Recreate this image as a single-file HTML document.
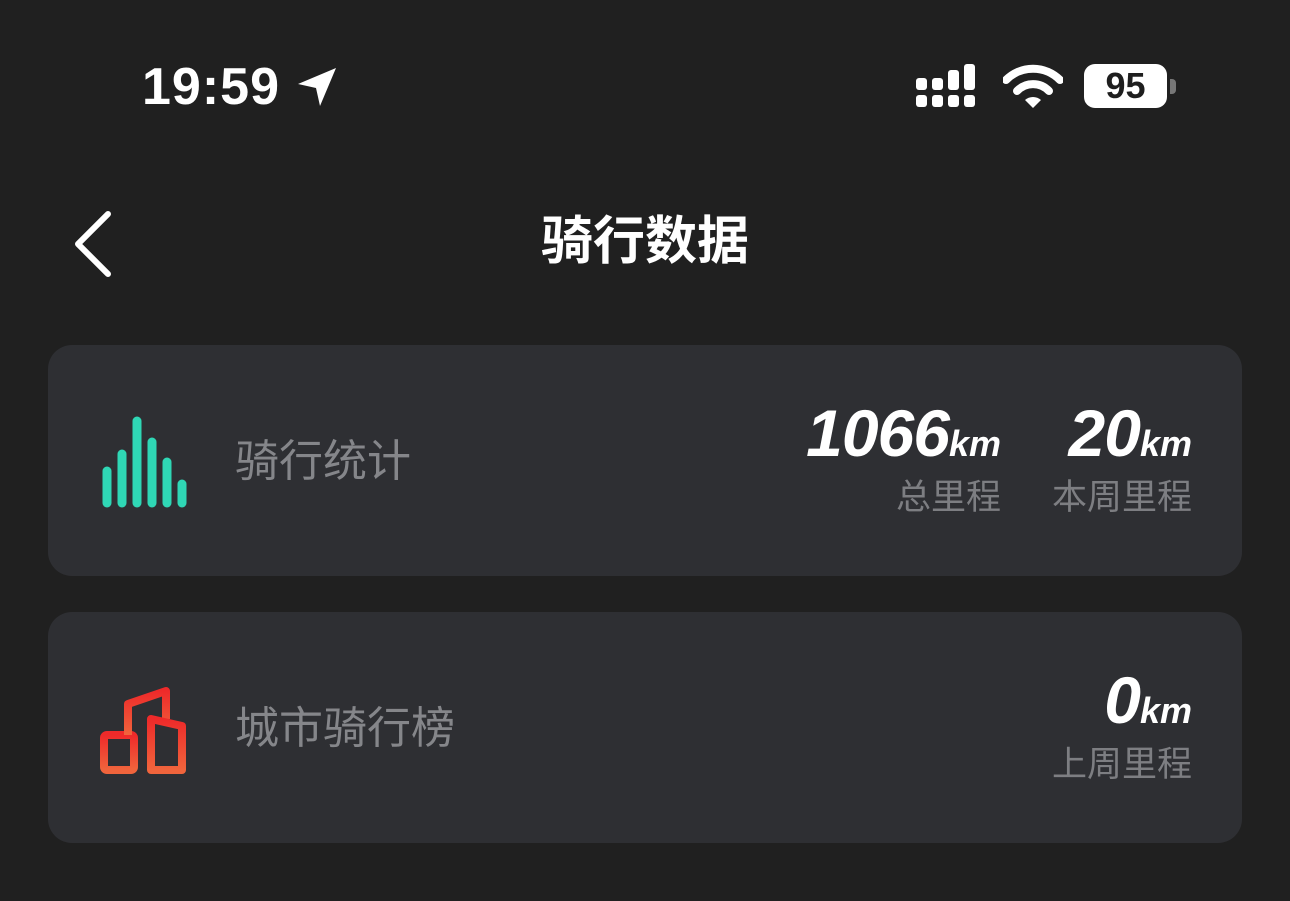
<!DOCTYPE html>
<html><head><meta charset="utf-8"><style>
body{margin:0;width:1290px;height:901px;background:#202020;overflow:hidden;position:relative;font-family:"Liberation Sans","Noto Sans CJK SC",sans-serif;color:#fff}
.a{position:absolute}
.card{position:absolute;left:48px;width:1194px;height:231px;background:#2e2f33;border-radius:24px}
.lbl{position:absolute;left:187px;font-size:44px;color:#85868a;line-height:1}
.num{position:absolute;font-weight:bold;font-style:italic;font-size:66px;letter-spacing:-1px;line-height:1;text-align:right;white-space:nowrap}
.num small{font-size:36px;letter-spacing:0}
.sub{position:absolute;font-size:35px;color:#7d7e82;line-height:1;text-align:right}
</style></head><body>
<div class="a" style="left:142px;top:61px;font-size:52px;font-weight:bold;line-height:1;letter-spacing:1px">19:59</div>
<svg class="a" style="left:296px;top:66px" width="42" height="42" viewBox="0 0 42 42"><path d="M40 2 L2 18 L20 22 L24 40 Z" fill="#fff"/></svg>
<svg class="a" style="left:914px;top:64px" width="70" height="46"><g fill="#fff">
<rect x="2" y="14" width="11" height="12" rx="3"/><rect x="18" y="14" width="11" height="12" rx="3"/><rect x="34" y="6" width="11" height="20" rx="3"/><rect x="50" y="0" width="11" height="26" rx="3"/>
<rect x="2" y="31" width="11" height="12" rx="3"/><rect x="18" y="31" width="11" height="12" rx="3"/><rect x="34" y="31" width="11" height="12" rx="3"/><rect x="50" y="31" width="11" height="12" rx="3"/></g></svg>
<svg class="a" style="left:1003px;top:64px" width="60" height="44" viewBox="0 0 60 44"><path d="M3 16 A38 38 0 0 1 57 16" stroke="#fff" stroke-width="8" fill="none" stroke-linecap="round"/><path d="M14 27 A22 22 0 0 1 46 27" stroke="#fff" stroke-width="8" fill="none" stroke-linecap="round"/><path d="M22 36 L30 44 L38 36 A12 12 0 0 0 22 36Z" fill="#fff"/></svg>
<div class="a" style="left:1084px;top:64px;width:83px;height:44px;background:#fff;border-radius:11px;color:#1e1e1e;font-weight:bold;font-size:36px;text-align:center;line-height:44px">95</div>
<div class="a" style="left:1170px;top:79px;width:6px;height:15px;background:#777;border-radius:0 4px 4px 0"></div>
<svg class="a" style="left:70px;top:210px" width="46" height="68"><path d="M38 4 L8 34 L38 64" stroke="#fff" stroke-width="6" fill="none" stroke-linecap="round" stroke-linejoin="round"/></svg>
<div class="a" style="left:0;width:1290px;top:214px;text-align:center;font-size:52px;font-weight:bold;line-height:1.1">骑行数据</div>

<div class="card" style="top:345px">
<svg class="a" style="left:50px;top:68px" width="100" height="100"><g stroke="#2fd7b5" stroke-width="9" stroke-linecap="round">
<line x1="9" y1="58" x2="9" y2="90"/><line x1="24" y1="41" x2="24" y2="90"/><line x1="39" y1="8" x2="39" y2="90"/><line x1="54" y1="29" x2="54" y2="90"/><line x1="69" y1="49" x2="69" y2="90"/><line x1="84" y1="71" x2="84" y2="90"/></g></svg>
<div class="lbl" style="top:95px">骑行统计</div>
<div class="num" style="right:241px;top:55px">1066<small>km</small></div>
<div class="num" style="right:50px;top:55px">20<small>km</small></div>
<div class="sub" style="right:241px;top:135px">总里程</div>
<div class="sub" style="right:50px;top:135px">本周里程</div>
</div>

<div class="card" style="top:612px">
<svg class="a" style="left:50px;top:70px" width="100" height="100" viewBox="0 0 100 100"><defs><linearGradient id="g" x1="0" y1="0" x2="0" y2="1"><stop offset="0" stop-color="#ee2a2a"/><stop offset="1" stop-color="#f0643c"/></linearGradient></defs><g stroke="url(#g)" stroke-width="8" fill="none" stroke-linejoin="round">
<rect x="6" y="53" width="30" height="35" rx="3"/><path d="M30 53 V22 L68 9 V37"/><path d="M53 37 L84 44 V88 H53 Z"/></g></svg>
<div class="lbl" style="top:95px">城市骑行榜</div>
<div class="num" style="right:50px;top:55px">0<small>km</small></div>
<div class="sub" style="right:50px;top:135px">上周里程</div>
</div>
</body></html>
